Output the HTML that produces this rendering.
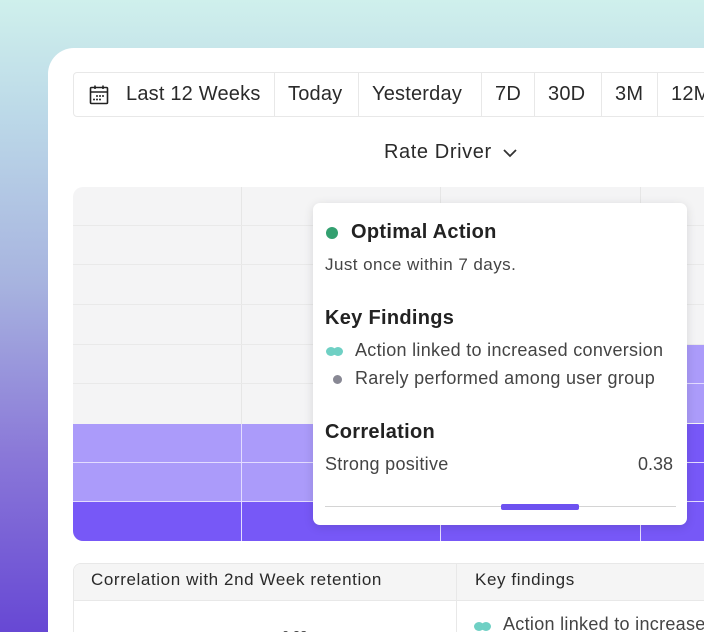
<!DOCTYPE html>
<html><head><style>
*{margin:0;padding:0;box-sizing:border-box}
html,body{width:704px;height:632px;overflow:hidden}
body{font-family:"Liberation Sans",sans-serif;color:#222}
.wrap{position:relative;width:704px;height:632px;overflow:hidden;
background:linear-gradient(180deg,#cff0ec 0%,#bcd9e8 18%,#a7b3df 45%,#8a78d8 72%,#6748d4 100%)}
.card{position:absolute;left:48px;top:48px;width:720px;height:640px;background:#fff;border-radius:26px}
.tb{position:absolute;left:73px;top:72px;height:45px;width:700px;border:1px solid #e8e8e8;border-radius:4px;display:flex;font-size:20px;color:#2a2a2a;letter-spacing:.2px}
.tb div{border-right:1px solid #e8e8e8;display:flex;align-items:center;padding:0 13px;height:100%;white-space:nowrap}
.grid{position:absolute;left:73px;top:187px;width:700px;height:354px;border-radius:10px;overflow:hidden;background:#f4f4f5}
.pop{position:absolute;left:313px;top:203px;width:374px;height:322px;background:#fff;border-radius:7px;box-shadow:0 2px 10px rgba(0,0,0,.12)}
.pop div{white-space:nowrap}
.bt{position:absolute;left:73px;top:563px;width:700px;height:100px;border:1px solid #e8e8e8;border-radius:8px;overflow:hidden}
</style></head><body><div class="wrap">
<div class="card"></div>
<div class="tb">
<div style="width:201px;padding-left:14px"><svg width="22" height="22" viewBox="0 0 22 22" fill="none" stroke="#222" stroke-width="1.6"><rect x="2.5" y="3.5" width="17" height="16" rx="1"/><line x1="2.5" y1="8" x2="19.5" y2="8"/><line x1="7" y1="1.5" x2="7" y2="5"/><line x1="15" y1="1.5" x2="15" y2="5"/><g fill="#222" stroke="none"><circle cx="9" cy="12" r="1"/><circle cx="12" cy="12" r="1"/><circle cx="15" cy="12" r="1"/><circle cx="6" cy="15.5" r="1"/><circle cx="9" cy="15.5" r="1"/><circle cx="12" cy="15.5" r="1"/></g></svg><span style="margin-left:16px">Last 12 Weeks</span></div>
<div style="width:84px">Today</div><div style="width:123px">Yesterday</div><div style="width:53px">7D</div><div style="width:67px">30D</div><div style="width:56px">3M</div><div>12M</div>
</div>
<div style="position:absolute;left:384px;top:141px;font-size:20px;color:#2a2a2a;letter-spacing:.6px;white-space:nowrap">Rate Driver <svg width="16" height="10" viewBox="0 0 16 10" style="margin-left:4px"><path d="M2 2l6 6 6-6" stroke="#333" stroke-width="1.8" fill="none"/></svg></div>
<div class="grid">
<div style="position:absolute;left:168px;top:0;width:1px;height:354px;background:#e6e6e6"></div>
<div style="position:absolute;left:367px;top:0;width:1px;height:354px;background:#e6e6e6"></div>
<div style="position:absolute;left:567px;top:0;width:1px;height:354px;background:#e6e6e6"></div>
<div style="position:absolute;left:0;top:38px;width:700px;height:1px;background:#e9e9e9"></div>
<div style="position:absolute;left:0;top:77px;width:700px;height:1px;background:#e9e9e9"></div>
<div style="position:absolute;left:0;top:117px;width:700px;height:1px;background:#e9e9e9"></div>
<div style="position:absolute;left:0;top:157px;width:700px;height:1px;background:#e9e9e9"></div>
<div style="position:absolute;left:0;top:196px;width:700px;height:1px;background:#e9e9e9"></div>
<div style="position:absolute;left:0;top:237px;width:567px;height:77px;background:#ab9bfa"></div>
<div style="position:absolute;left:568px;top:158px;width:132px;height:78px;background:#ab9bfa"></div>
<div style="position:absolute;left:568px;top:237px;width:132px;height:77px;background:#7758f7"></div>
<div style="position:absolute;left:0;top:315px;width:700px;height:39px;background:#7758f7"></div>
<div style="position:absolute;left:0;top:275px;width:700px;height:1px;background:#e3dcff"></div>
<div style="position:absolute;left:0;top:314px;width:700px;height:1px;background:#e3dcff"></div>
<div style="position:absolute;left:568px;top:196px;width:132px;height:1px;background:#e3dcff"></div>
<div style="position:absolute;left:168px;top:237px;width:1px;height:117px;background:#e3dcff"></div>
<div style="position:absolute;left:367px;top:315px;width:1px;height:39px;background:#e3dcff"></div>
<div style="position:absolute;left:567px;top:158px;width:1px;height:196px;background:#e3dcff"></div>
</div>
<div class="pop">
<div style="position:absolute;left:13px;top:24px;width:12px;height:12px;border-radius:50%;background:#33a070"></div>
<div style="position:absolute;left:38px;top:18px;font-size:20px;font-weight:bold;color:#222;letter-spacing:.3px">Optimal Action</div>
<div style="position:absolute;left:12px;top:52px;font-size:17px;color:#444;letter-spacing:.45px">Just once within 7 days.</div>
<div style="position:absolute;left:12px;top:104px;font-size:20px;font-weight:bold;color:#222;letter-spacing:.3px">Key Findings</div>
<div style="position:absolute;left:13px;top:144px;width:10px;height:9px;border-radius:50%;background:#6fd0c4"></div>
<div style="position:absolute;left:20px;top:144px;width:10px;height:9px;border-radius:50%;background:#6fd0c4"></div>
<div style="position:absolute;left:42px;top:137px;font-size:18px;color:#444;letter-spacing:.3px">Action linked to increased conversion</div>
<div style="position:absolute;left:20px;top:172px;width:9px;height:9px;border-radius:50%;background:#888894"></div>
<div style="position:absolute;left:42px;top:165px;font-size:18px;color:#444;letter-spacing:.3px">Rarely performed among user group</div>
<div style="position:absolute;left:12px;top:218px;font-size:20px;font-weight:bold;color:#222;letter-spacing:.3px">Correlation</div>
<div style="position:absolute;left:12px;top:251px;font-size:18px;color:#444;letter-spacing:.3px">Strong positive</div>
<div style="position:absolute;right:14px;top:251px;font-size:18px;color:#444">0.38</div>
<div style="position:absolute;left:12px;top:303px;width:351px;height:1px;background:#d4d4d4"></div>
<div style="position:absolute;left:188px;top:301px;width:78px;height:6px;border-radius:2px;background:#6d52f0"></div>
</div>
<div class="bt">
<div style="height:37px;background:#f5f5f5;border-bottom:1px solid #e8e8e8;font-size:17px;color:#2a2a2a;position:relative;letter-spacing:.6px;white-space:nowrap">
<span style="position:absolute;left:17px;top:6px">Correlation with 2nd Week retention</span>
<span style="position:absolute;left:401px;top:6px">Key findings</span></div>
<div style="position:absolute;left:382px;top:0;width:1px;height:100px;background:#e8e8e8"></div>
<div style="position:absolute;left:208px;top:64px;font-size:13px;color:#444">0.38</div>
<div style="position:absolute;left:400px;top:58px;width:10px;height:9px;border-radius:50%;background:#6fd0c4"></div>
<div style="position:absolute;left:407px;top:58px;width:10px;height:9px;border-radius:50%;background:#6fd0c4"></div>
<div style="position:absolute;left:429px;top:50px;font-size:18px;color:#444;white-space:nowrap;letter-spacing:.3px">Action linked to increased conversion</div>
</div>
</div></body></html>
